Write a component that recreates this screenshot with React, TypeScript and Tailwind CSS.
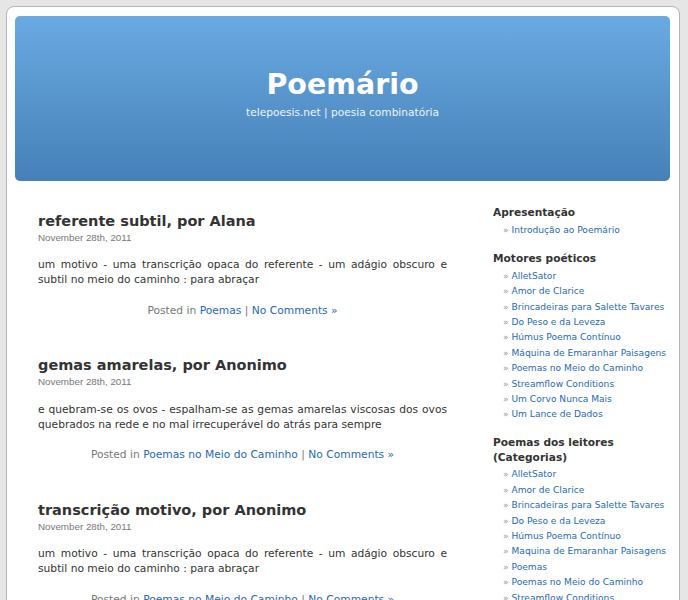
const posts = [
  {
    title: 'referente subtil, por Alana',
    body: 'um motivo - uma transcrição opaca do referente - um adágio obscuro e subtil no meio do caminho : para abraçar',
    category: 'Poemas',
  },
  {
    title: 'gemas amarelas, por Anonimo',
    body: 'e quebram-se os ovos - espalham-se as gemas amarelas viscosas dos ovos quebrados na rede e no mal irrecuperável do atrás para sempre',
    category: 'Poemas no Meio do Caminho',
  },
  {
    title: 'transcrição motivo, por Anonimo',
    body: 'um motivo - uma transcrição opaca do referente - um adágio obscuro e subtil no meio do caminho : para abraçar',
    category: 'Poemas no Meio do Caminho',
  },
];

const motores = [
  'AlletSator',
  'Amor de Clarice',
  'Brincadeiras para Salette Tavares',
  'Do Peso e da Leveza',
  'Húmus Poema Contínuo',
  'Máquina de Emaranhar Paisagens',
  'Poemas no Meio do Caminho',
  'Streamflow Conditions',
  'Um Corvo Nunca Mais',
  'Um Lance de Dados',
];

const categorias = [
  'AlletSator',
  'Amor de Clarice',
  'Brincadeiras para Salette Tavares',
  'Do Peso e da Leveza',
  'Húmus Poema Contínuo',
  'Maquina de Emaranhar Paisagens',
  'Poemas',
  'Poemas no Meio do Caminho',
  'Streamflow Conditions',
  'Um Corvo Nunca Mais',
  'Um Lance de Dados',
];

/* ── Sidebar ────────────────────────────────────────────────────────────────── */

function Widget({ title, items }: { title: string; items: string[] }) {
  return (
    <div className="flex flex-col">
      <h2 className="text-[10.6px] font-bold leading-[14.3px] text-[#333]">{title}</h2>
      <ul className="mt-[3.6px] pl-[10px]">
        {items.map((item) => (
          <li key={item} className="whitespace-nowrap text-[9.1px] leading-[15.4px]">
            <span className="text-[#999]">» </span>
            <a href="#" className="text-[#1f69b6]">
              {item}
            </a>
          </li>
        ))}
      </ul>
    </div>
  );
}

/* ── App ────────────────────────────────────────────────────────────────────── */

export default function App() {
  return (
    <div
      className="h-[600px] overflow-hidden bg-[#e6e6e6] pl-[6px] pt-[6px]"
      style={{ fontFamily: '"DejaVu Sans", Verdana, sans-serif' }}
    >
      <div className="min-h-[700px] w-[674px] rounded-t-[8px] border border-[#b4b4b4] bg-white">
        <header className="ml-[8px] mt-[9px] flex h-[165px] w-[655px] flex-col items-center rounded-[5px] bg-linear-to-b from-[#6aa9e2] to-[#4581b8] pt-[52px]">
          <h1 className="text-[28.5px] font-bold leading-[34px] text-white">Poemário</h1>
          <p className="mt-[3px] text-[10.6px] leading-[14px] text-[#eef4fa]">
            telepoesis.net | poesia combinatória
          </p>
        </header>

        <div className="flex pl-[31px] pt-[31px]">
          <main className="flex w-[409px] flex-col gap-[38.8px]">
            {posts.map((post) => (
              <article key={post.title} className="flex flex-col">
                <h2 className="text-[14.5px] font-bold leading-[18px] text-[#333]">
                  {post.title}
                </h2>
                <small
                  className="mt-[2px] text-[9.8px] leading-[12px] text-[#777]"
                  style={{ fontFamily: '"Liberation Sans", Arial, sans-serif' }}
                >
                  November 28th, 2011
                </small>
                <p className="mt-[13.4px] text-justify text-[10.7px] leading-[15px] text-[#333]">
                  {post.body}
                </p>
                <p className="mt-[15.3px] text-center text-[10.7px] leading-[15px] text-[#777]">
                  Posted in{' '}
                  <a href="#" className="text-[#1f69b6]">
                    {post.category}
                  </a>{' '}
                  |{' '}
                  <a href="#" className="text-[#1f69b6]">
                    No Comments »
                  </a>
                </p>
              </article>
            ))}
          </main>

          {/* sidebar sits a little higher than the first post title */}
          <aside className="-mt-[6.8px] ml-[46px] flex w-[177px] flex-col gap-[12.4px]">
            <Widget title="Apresentação" items={['Introdução ao Poemário']} />
            <Widget title="Motores poéticos" items={motores} />
            <Widget title="Poemas dos leitores (Categorias)" items={categorias} />
          </aside>
        </div>
      </div>
    </div>
  );
}
